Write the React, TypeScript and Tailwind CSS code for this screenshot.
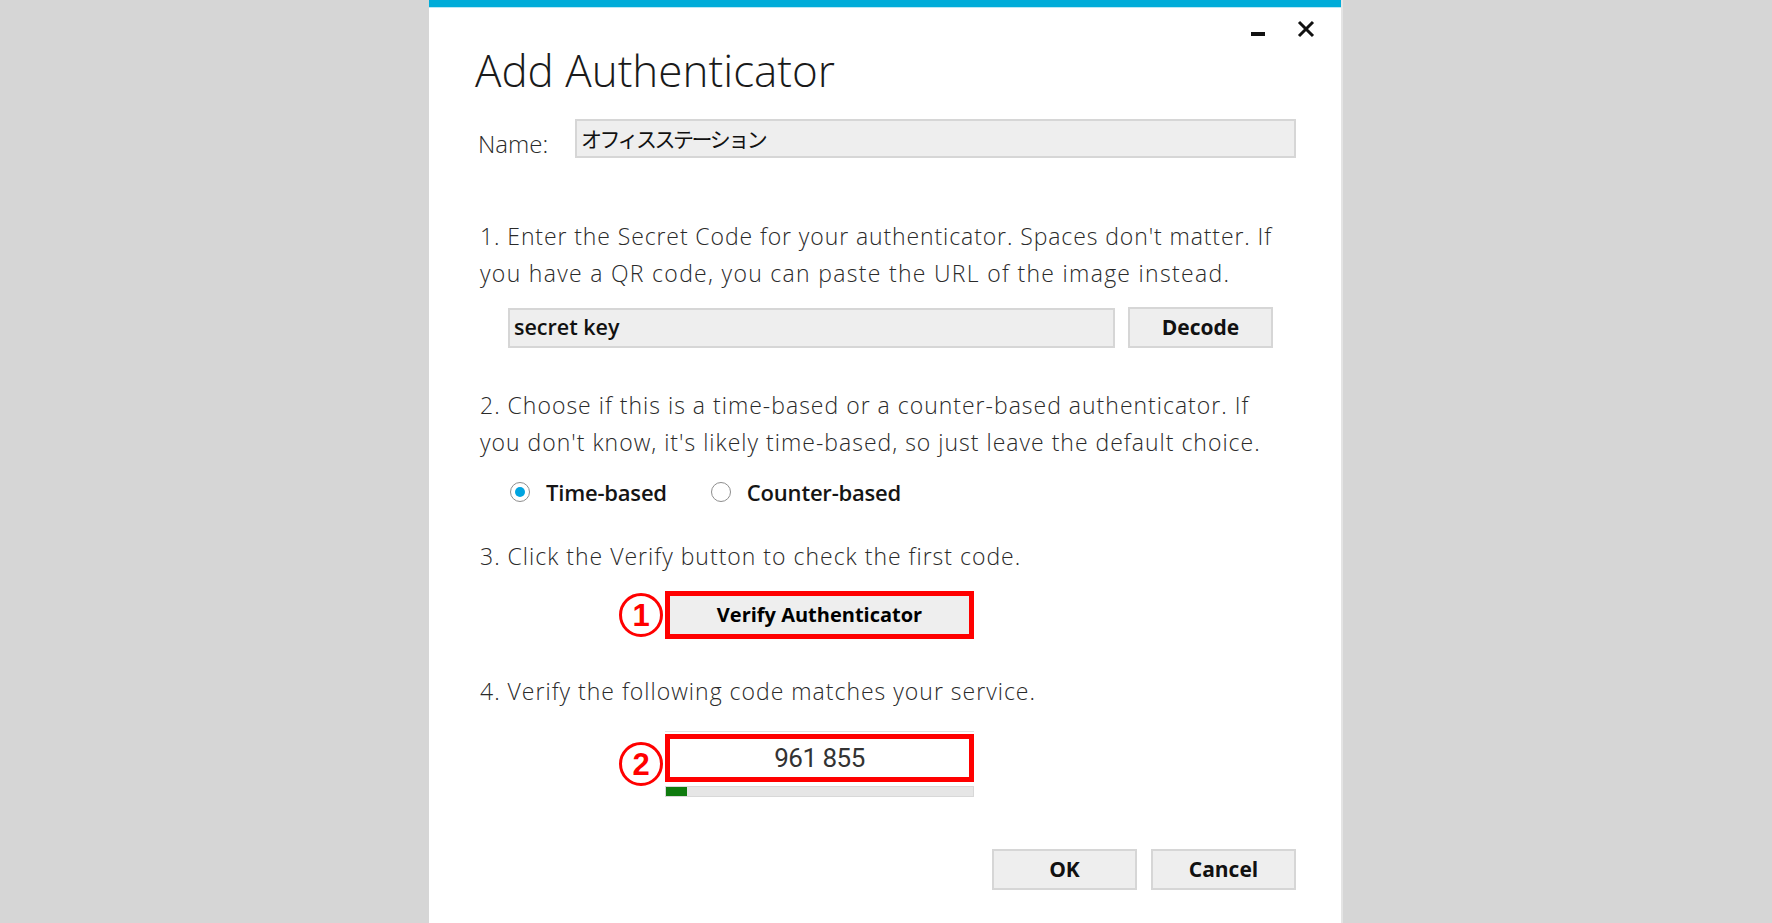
import React from 'react'

function Radio({ checked, label }: { checked?: boolean; label: string }) {
  return (
    <label className="flex items-center gap-[16px]">
      <span className="flex h-[20px] w-[20px] items-center justify-center rounded-full border-[1.5px] border-[#8e8e8e] bg-white">
        {checked && <span className="h-[10px] w-[10px] rounded-full bg-[#00a4e0]" />}
      </span>
      <span className="text-[22px] font-semibold leading-[30px] tracking-[-0.2px] text-[#151515]">{label}</span>
    </label>
  )
}

function Marker({ n }: { n: string }) {
  return (
    <div className="flex h-[44px] w-[44px] shrink-0 items-center justify-center rounded-full border-[3px] border-[#ff0000] font-['Liberation_Sans',sans-serif] text-[31px] font-bold leading-none text-[#ff0000]">
      {n}
    </div>
  )
}

function GrayButton({ children, className }: { children: React.ReactNode; className?: string }) {
  return (
    <button
      className={
        'flex items-center justify-center border-2 border-[#d6d6d6] bg-[#eeeeee] text-[21px] font-bold text-[#111] ' +
        (className ?? '')
      }
    >
      {children}
    </button>
  )
}

export default function App() {
  return (
    <div className="flex h-[923px] w-full justify-center overflow-hidden bg-[#d6d6d6] font-['Open_Sans',sans-serif]">
      <div className="flex h-full w-[914px] flex-col border-r-2 border-[#e4e4e4] bg-white">
        <div className="h-[7px] bg-[#00acd9]" />
        <div className="h-px bg-[#b8e8f6]" />

        {/* header */}
        <div className="flex items-start justify-between pl-[46px] pr-[26px]">
          <h1 className="mt-[34px] text-[44px] font-light leading-[56px] text-[#1a1a1a]">
            Add Authenticator
          </h1>
          <div className="mt-[12px] flex items-start gap-[32px]">
            <div className="mt-[12px] h-[4px] w-[14px] bg-[#111]" />
            <svg width="18" height="18" viewBox="0 0 18 18" className="text-[#111]">
              <path d="M2 2 L16 16 M16 2 L2 16" stroke="currentColor" strokeWidth="3" />
            </svg>
          </div>
        </div>

        <div className="flex flex-col pl-[47px] pr-[45px] text-[#2a2a2a]">
          {/* name */}
          <div className="mt-[21px] flex items-end">
            <span className="w-[99px] pl-[2px] text-[24px] font-[350] leading-[28px]">Name:</span>
            <div className="flex h-[39px] flex-1 items-center border-2 border-[#d6d6d6] bg-[#eeeeee] pl-[4px] font-['Noto_Sans_CJK_JP',sans-serif] text-[21px] tracking-[-2.5px] text-[#111]">
              オフィスステーション
            </div>
          </div>

          {/* step 1 */}
          <p className="mt-[60px] pl-[4px] text-[23px] font-[350] leading-[37px] tracking-[1px]">
            <span className="block tracking-[0.9px]">1. Enter the Secret Code for your authenticator. Spaces don't matter. If</span>
            <span className="block tracking-[1.3px]">you have a QR code, you can paste the URL of the image instead.</span>
          </p>
          <div className="mt-[15px] flex items-center gap-[13px] pl-[32px]">
            <div className="flex h-[40px] w-[607px] items-center border-2 border-[#d6d6d6] bg-[#eeeeee] pl-[4px] text-[21.5px] font-semibold text-[#111]">
              secret key
            </div>
            <GrayButton className="h-[41px] w-[145px]">Decode</GrayButton>
          </div>

          {/* step 2 */}
          <p className="mt-[39px] pl-[4px] text-[23px] font-[350] leading-[37px] tracking-[1px]">
            <span className="block">2. Choose if this is a time-based or a counter-based authenticator. If</span>
            <span className="block">you don't know, it's likely time-based, so just leave the default choice.</span>
          </p>
          <div className="mt-[16px] flex items-center gap-[44px] pl-[34px]">
            <Radio checked label="Time-based" />
            <Radio label="Counter-based" />
          </div>

          {/* step 3 */}
          <p className="mt-[31px] pl-[4px] text-[23px] font-[350] leading-[37px] tracking-[1px]">
            3. Click the Verify button to check the first code.
          </p>
          <div className="mt-[16px] flex items-center gap-[2px] pl-[143px]">
            <Marker n="1" />
            <div className="flex h-[48px] w-[309px] items-center justify-center border-[5px] border-[#ff0000] bg-[#eeeeee] text-[20px] font-bold text-[#000]">
              Verify Authenticator
            </div>
          </div>

          {/* step 4 */}
          <p className="mt-[34px] pl-[4px] text-[23px] font-[350] leading-[37px] tracking-[1px]">
            4. Verify the following code matches your service.
          </p>
          <div className="mt-[21px] flex items-center gap-[2px] pl-[143px]">
            <Marker n="2" />
            <div className="flex w-[309px] flex-col">
              <div className="border-t border-[#e2e2e2] pt-[2px]">
                <div className="flex h-[48px] items-center justify-center border-[5px] border-[#ff0000] bg-white font-['Roboto',sans-serif] text-[26px] tracking-[-0.5px] text-[#333]">
                  961 855
                </div>
              </div>
              <div className="mt-[4px] h-[11px] border border-[#d8d8d8] bg-[#e6e6e6]">
                <div className="h-full w-[21px] bg-[#0f7b0f]" />
              </div>
            </div>
          </div>

          {/* actions */}
          <div className="mt-[52px] flex justify-end gap-[14px]">
            <GrayButton className="h-[41px] w-[145px]">OK</GrayButton>
            <GrayButton className="h-[41px] w-[145px]">Cancel</GrayButton>
          </div>
        </div>
      </div>
    </div>
  )
}
